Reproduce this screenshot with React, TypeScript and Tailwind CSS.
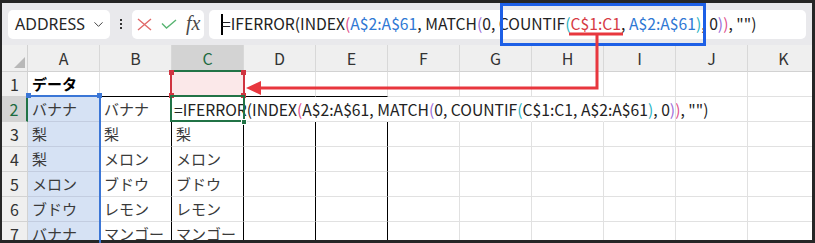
import { ChevronDown } from 'lucide-react'

const COLS = ['A', 'B', 'C', 'D', 'E', 'F', 'G', 'H', 'I', 'J', 'K']

const DATA: string[][] = [
  ['データ', '', ''],
  ['バナナ', 'バナナ', ''],
  ['梨', '梨', '梨'],
  ['梨', 'メロン', 'メロン'],
  ['メロン', 'ブドウ', 'ブドウ'],
  ['ブドウ', 'レモン', 'レモン'],
  ['バナナ', 'マンゴー', 'マンゴー'],
]

// paren colours are the same in bar and cell, refs only coloured in the bar
const PINK = 'text-[#e0508c]'
const PURPLE = 'text-[#9a6cd8]'
const TEAL = 'text-[#27b2c2]'

function Formula({ colorRefs }: { colorRefs: boolean }) {
  const blue = colorRefs ? 'text-[#2f78d4]' : ''
  const red = colorRefs ? 'text-[#d63a44]' : ''
  const segs: [string, string][] = [
    ['=IFERROR(INDEX', ''],
    ['(', PINK],
    ['A$2:A$61', blue],
    [', MATCH', ''],
    ['(', PURPLE],
    ['0, COUNTIF', ''],
    ['(', TEAL],
    ['C$1:C1', red],
    [', ', ''],
    ['A$2:A$61', blue],
    [')', TEAL],
    [', 0', ''],
    [')', PURPLE],
    [')', PINK],
    [', "")', ''],
  ]
  return (
    <span className="whitespace-pre text-[15.7px]">
      {segs.map(([t, cls], i) => (
        <span key={i} className={cls}>
          {t}
        </span>
      ))}
    </span>
  )
}

function cellClass(r: number, c: number) {
  let bg = ''
  if (c === 0 && r >= 1) bg = 'bg-[#d6e2f4]'
  if (r === 0 && c === 2) bg = 'bg-[#fbe8e9]'

  let right = 'border-r-[#e1e1e1]'
  if (r === 1 && c >= 3 && c <= 7) right = 'border-r-transparent'
  else if (r >= 1 && c >= 1 && c <= 4) right = 'border-r-black'

  let bottom = 'border-b-[#e1e1e1]'
  if (r === 0 && c <= 4) bottom = 'border-b-black'
  else if (c === 0) bottom = 'border-b-[#c3cde0]'

  return `${bg} ${right} ${bottom}`
}

export default function App() {
  return (
    <div className="relative w-[815px] h-[243px] bg-[#262626] pt-[3px] pl-[2px] pr-[3px] pb-[3px]">
      <div className="flex flex-col h-full bg-white overflow-hidden">
        {/* formula bar */}
        <div className="h-[42px] shrink-0 bg-[#e9e9ec] flex items-center font-['Noto_Sans',sans-serif]">
          <div className="ml-[6px] w-[102px] h-[29px] bg-white rounded-[5px] flex items-center justify-between pl-[7px] pr-[4px]">
            <span className="text-[16px] text-[#262626]">ADDRESS</span>
            <ChevronDown size={15} strokeWidth={1.6} className="text-[#444]" />
          </div>
          <div className="w-[22px] flex flex-col items-center gap-[2px]">
            <div className="w-[2px] h-[2px] bg-[#333]" />
            <div className="w-[2px] h-[2px] bg-[#333]" />
            <div className="w-[2px] h-[2px] bg-[#333]" />
          </div>
          <div className="w-[72px] h-[29px] bg-white rounded-[5px] flex items-center pl-[5px] gap-[9px]">
            <svg width="15" height="13" viewBox="0 0 15 13">
              <path d="M1 1 L14 12 M14 1 L1 12" stroke="#e06a6a" strokeWidth="1.4" fill="none" />
            </svg>
            <svg width="16" height="10" viewBox="0 0 16 10">
              <path d="M1 4.5 L5.5 9 L15 1" stroke="#58b472" strokeWidth="1.4" fill="none" />
            </svg>
            <span className="font-['Liberation_Serif',serif] italic text-[20px] text-[#4a4a4a] leading-none -mt-[2px]">
              fx
            </span>
          </div>
          <div className="ml-[5px] mr-[6px] flex-1 h-[29px] bg-white rounded-[5px] flex items-center pl-[12px] font-['Noto_Sans_CJK_JP',sans-serif] text-[#222]">
            <div className="w-[2px] h-[21px] bg-black -mr-[1px]" />
            <Formula colorRefs />
          </div>
        </div>

        {/* sheet */}
        <div className="flex-1 overflow-hidden font-['Noto_Sans_CJK_JP',sans-serif] text-[15px]">
          <div className="flex h-[27px]">
            <div className="w-[26px] shrink-0 bg-[#efefef] border-r border-b border-[#d2d2d2] flex items-end justify-end pr-[2px] pb-[3px]">
              <svg width="11" height="11" viewBox="0 0 11 11">
                <path d="M11 0 L11 11 L0 11 Z" fill="#b8b8b8" />
              </svg>
            </div>
            {COLS.map((c) => (
              <div
                key={c}
                className={`w-[72px] shrink-0 flex items-center justify-center border-r border-r-[#d8d8d8] text-[16px] ${
                  c === 'C'
                    ? 'bg-[#d3d3d3] border-b-2 border-b-[#217346] text-[#1d6b3f]'
                    : 'bg-[#efefef] border-b border-b-[#d2d2d2] text-[#333]'
                }`}
              >
                {c}
              </div>
            ))}
          </div>

          {DATA.map((row, r) => (
            <div key={r} className="flex h-[25px]">
              <div
                className={`w-[26px] shrink-0 flex items-center justify-center border-b border-b-[#d2d2d2] text-[16px] ${
                  r === 1
                    ? 'bg-[#d3d3d3] border-r-2 border-r-[#217346] text-[#1d6b3f]'
                    : 'bg-[#efefef] border-r border-r-[#d2d2d2] text-[#333]'
                }`}
              >
                {r + 1}
              </div>
              {COLS.map((c, ci) => (
                <div
                  key={c}
                  className={`w-[72px] shrink-0 border-r border-b flex items-center pt-[1px] ${
                    ci === 2 && r === 1 ? 'pl-[2px] text-[#222]' : 'pl-[4px]'
                  } ${cellClass(r, ci)} ${r === 0 && ci === 0 ? 'font-bold text-black' : 'text-[#3a3a3a]'}`}
                >
                  {ci === 2 && r === 1 ? <Formula colorRefs={false} /> : row[ci] ?? ''}
                </div>
              ))}
            </div>
          ))}
        </div>
      </div>

      {/* range highlight A2:A7 */}
      <div className="absolute left-[27px] top-[95px] w-[74px] h-[150px] border-t-2 border-r-2 border-[#3b76d6]" />
      <div className="absolute left-[26px] top-[93px] w-[5px] h-[5px] bg-[#3b76d6]" />
      <div className="absolute left-[97px] top-[93px] w-[5px] h-[5px] bg-[#3b76d6]" />

      {/* range highlight C1 */}
      <div className="absolute left-[170px] top-[72px] w-[75px] h-[25px] border-l-2 border-r-2 border-[#cf3440]" />
      <div className="absolute left-[169px] top-[70px] w-[5px] h-[5px] bg-[#cf3440]" />
      <div className="absolute left-[241px] top-[70px] w-[5px] h-[5px] bg-[#cf3440]" />
      <div className="absolute left-[169px] top-[93px] w-[5px] h-[5px] bg-[#cf3440]" />
      <div className="absolute left-[241px] top-[93px] w-[5px] h-[5px] bg-[#cf3440]" />

      {/* active cell C2 */}
      <div className="absolute left-[170px] top-[95px] w-[75px] h-[27px] border-2 border-[#217346]" />
      <div className="absolute left-[241px] top-[119px] w-[6px] h-[6px] bg-[#217346] border border-white" />

      {/* annotation */}
      <div className="absolute left-[500px] top-[3px] w-[206px] h-[43px] border-[3px] border-[#1d5fe6]" />
      <svg className="absolute inset-0 pointer-events-none" width="815" height="243">
        <path d="M569 34 L623 34" stroke="#e8373e" strokeWidth="3" />
        <path d="M597 34 L597 88 L260 88" stroke="#e8373e" strokeWidth="3" fill="none" />
        <path d="M246 88 L261 81 L261 95 Z" fill="#e8373e" />
      </svg>
    </div>
  )
}
